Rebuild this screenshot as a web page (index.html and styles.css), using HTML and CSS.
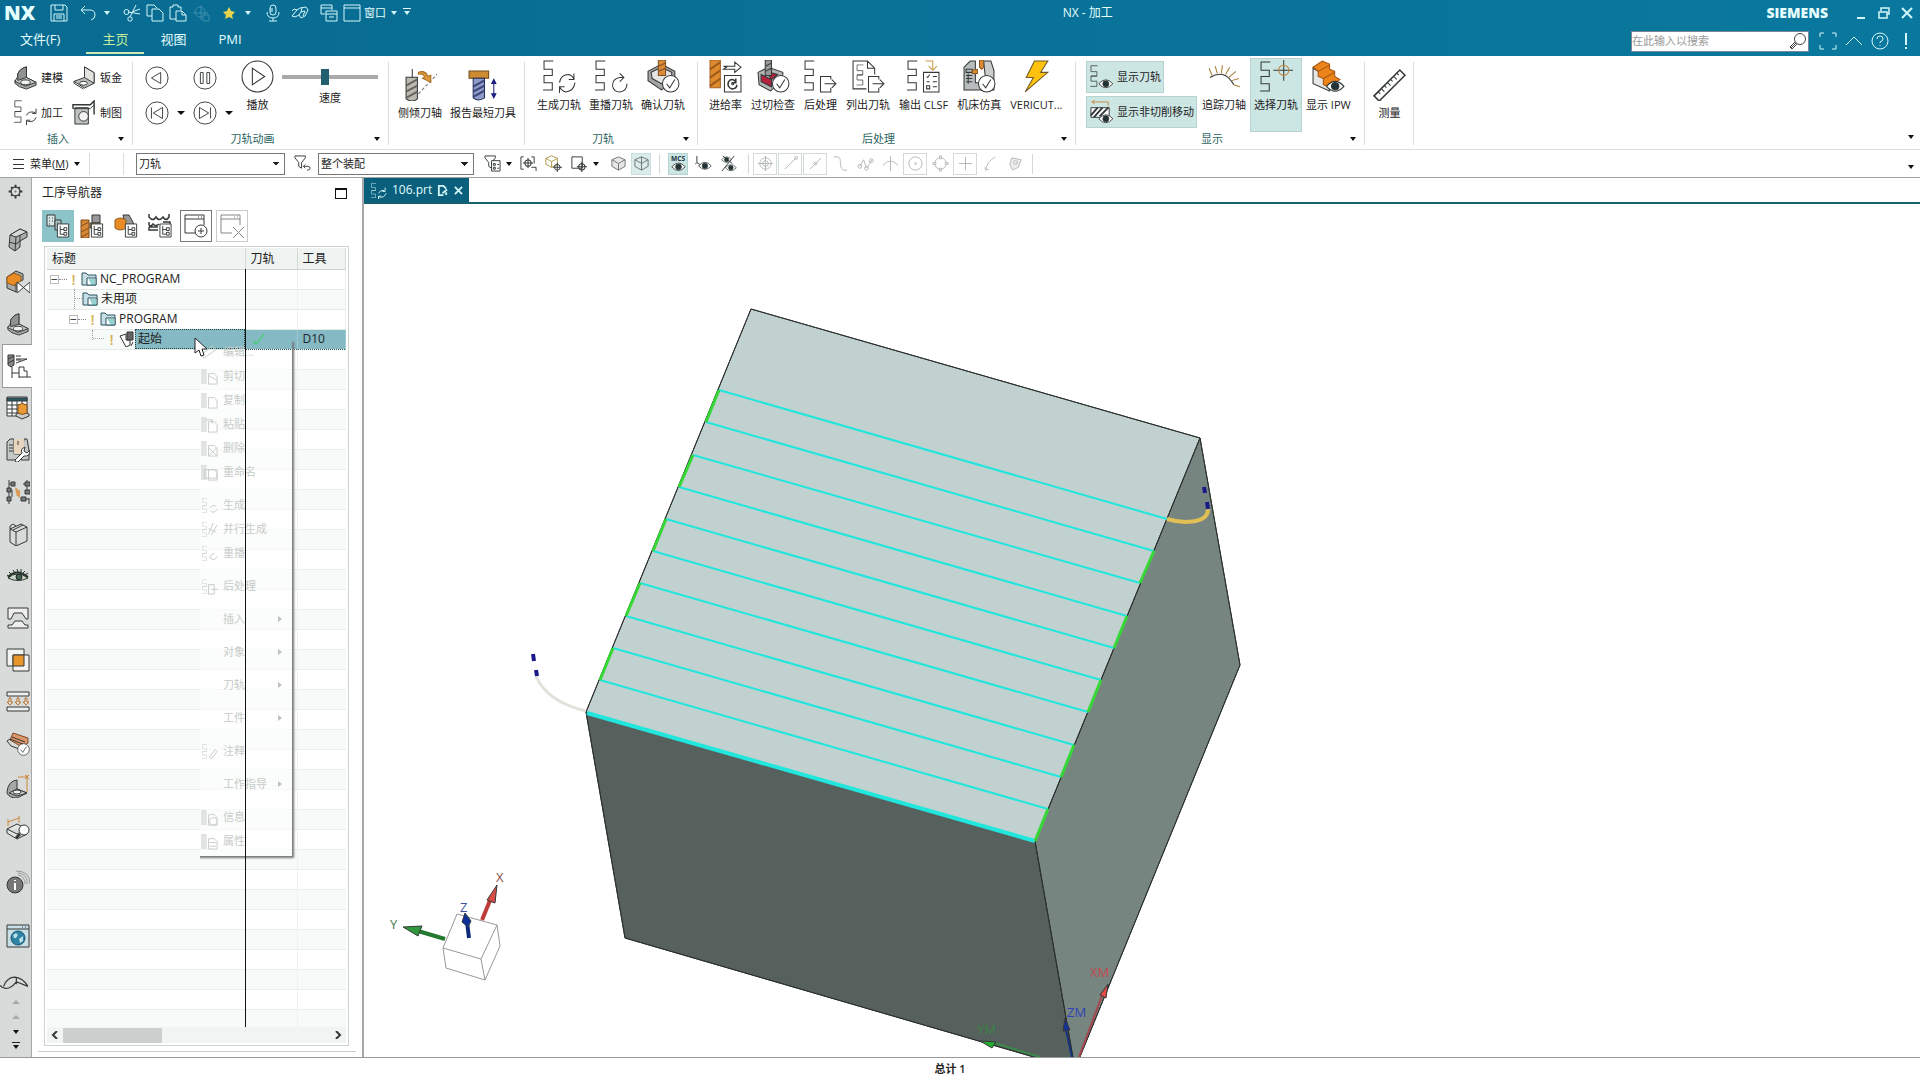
FILE: index.html
```html
<!DOCTYPE html>
<html lang="zh-CN">
<head>
    <meta charset="UTF-8">
    <meta name="viewport" content="width=device-width, initial-scale=1.0">
    <title>NX - 加工</title>
    <link rel="stylesheet" href="styles.css">
</head>
<body>
    <svg class="defs" width="0" height="0" aria-hidden="true">
        <symbol id="path" viewBox="0 0 11 30"><path d="M10 1H1V9H9V15H1M9 15H1V22H9V29H0"/></symbol>
        <symbol id="eye" viewBox="0 0 18 12"><path d="M1 6Q9-3 17 6Q9 15 1 6Z" fill="#fff"/><circle cx="9" cy="6" r="3.4" fill="#1f3336"/></symbol>
        <symbol id="check" viewBox="0 0 18 18"><circle cx="9" cy="9" r="8" fill="#fff"/><path d="M5 9l3 4 5-8"/></symbol>
        <symbol id="tree" viewBox="0 0 14 16"><path d="M1 1H13V15H1Z" fill="#fff"/><path d="M4 3V12H8M4 7H8M8 5h3v3H8zM8 10h3v3H8z"/></symbol>
        <symbol id="folder" viewBox="0 0 16 16"><path d="M1 14V2H5L7 4H15V14Z" fill="#c5dfe5" stroke="#2c5560"/><path d="M6 7H15V14H6Z" fill="#fff" stroke="#2c5560"/><path d="M8 9H14M9 11H14M10 13H14" stroke="#2aa7a0"/></symbol>
        <symbol id="model" viewBox="0 0 26 26"><path d="M5 16V9Q8 3 14 2V13L24 18V21L14 25Q5 23 2 19V16Z" fill="#a4a8a6"/><path d="M14 13L24 18L13 22L2 17L5 12Z" fill="#c9cccb"/><path d="M5 9Q8 3 14 2V13L5 16Z" fill="#8f9492"/><ellipse cx="13" cy="18" rx="5" ry="2.500" fill="#f2f2f2"/></symbol>
        <symbol id="cube" viewBox="0 0 16 16"><path d="M8 1L15 4V11L8 15L1 11V4ZM1 4L8 8L15 4M8 8V15"/></symbol>
        <symbol id="target" viewBox="0 0 10 10"><circle cx="5" cy="5" r="3"/><path d="M5 0V10M0 5H10"/></symbol>
        <symbol id="page" viewBox="0 0 18 18"><path d="M0 1H6V17H0Z" fill="#e0e3e1" stroke="none"/><path d="M8 6H14L17 9V17H8Z" fill="#fff"/></symbol>
    </svg>

    <header class="top">
        <div class="titlebar">
            <div class="quick">
                <strong class="logo">NX</strong>
                <button class="qb save" aria-label="保存"><svg viewBox="0 0 18 18"><path d="M1 1H15L17 3V17H1ZM5 1V6H13V1M4 17V10H14V17M6 12H12M6 14H12"/></svg></button>
                <button class="qb undo" aria-label="撤消"><svg viewBox="0 0 18 18"><path d="M6 2L2 6L6 10M2 6H11Q16 6 16 11Q16 15 12 16"/></svg></button>
                <i class="caret"></i>
                <button class="qb cut" aria-label="剪切"><svg viewBox="0 0 18 18"><path d="M5 8L17 10M7 13L13 1M9 8L17 5"/><circle cx="3.500" cy="8" r="2.500"/><circle cx="7" cy="15" r="2.200"/></svg></button>
                <button class="qb" aria-label="复制"><svg viewBox="0 0 18 18"><path d="M6 12H1V1H8L11 4M6 5H13L17 9V17H6Z"/></svg></button>
                <button class="qb" aria-label="粘贴"><svg viewBox="0 0 18 18"><path d="M7 15H1V3H4V1H9V3H12V6M7 7H13L17 11V17H7ZM13 7V11H17"/></svg></button>
                <button class="qb dim" aria-label="移动"><svg viewBox="0 0 18 18"><path d="M9 1V16M1 9H16"/><circle cx="8" cy="8" r="5"/><path d="M11 11H17V17H11Z"/></svg></button>
                <button class="qb star" aria-label="收藏"><svg viewBox="0 0 18 18"><path d="M9 3L11 7L15 8L12 11L13 15L9 13L5 15L6 11L3 8L7 7Z" fill="#e8d44c" stroke="none"/></svg></button>
                <i class="caret"></i>
                <button class="qb mic" aria-label="语音"><svg viewBox="0 0 18 18"><rect x="6" y="1" width="6" height="10" rx="3"/><path d="M3 8Q3 14 9 14Q15 14 15 8M9 14V17M5 17H13M6 5H9M6 7H9"/></svg></button>
                <button class="qb hand" aria-label="触控"><svg viewBox="0 0 18 18"><path d="M1 12L6 6L9 4L15 3L17 6L14 12L10 14L8 11L4 13ZM6 6L3 5L1 7M8 11L10 8L14 7L12 12M11 4L10 8"/></svg></button>
                <button class="qb" aria-label="切换窗口"><svg viewBox="0 0 18 18"><path d="M5 10H1V1H12V6M1 4H12M6 7H17V17H6ZM6 10H17M9 13H14"/></svg></button>
                <button class="qb win"><svg viewBox="0 0 18 18"><path d="M1 1H17V17H1ZM1 4H17"/></svg><span>窗口</span></button>
                <i class="caret"></i>
                <i class="caret over"></i>
            </div>
            <div class="title">NX - 加工</div>
            <div class="wincontrols">
                <strong class="siemens">SIEMENS</strong>
                <button aria-label="最小化"><svg viewBox="0 0 12 12"><path d="M2 11H10" stroke-width="2"/></svg></button>
                <button aria-label="还原"><svg viewBox="0 0 12 12"><path d="M3 4V1H11V7H9M1 5H9V11H1Z" stroke-width="1.500"/></svg></button>
                <button aria-label="关闭"><svg viewBox="0 0 12 12"><path d="M1 1L11 11M11 1L1 11" stroke-width="2"/></svg></button>
            </div>
        </div>
        <div class="menurow">
            <nav class="tabs">
                <button class="file">文件(F)</button>
                <button class="active">主页</button>
                <button>视图</button>
                <button>PMI</button>
            </nav>
            <div class="tools">
                <label class="search">
                    <input type="text" placeholder="在此输入以搜索" aria-label="搜索">
                    <svg viewBox="0 0 18 18"><circle cx="11" cy="7" r="5.500"/><path d="M7 11L2 16M6 10L1 15L3 17L8 12"/></svg>
                </label>
                <button aria-label="全屏"><svg viewBox="0 0 18 18"><path d="M1 5V1H5M13 1H17V5M17 13V17H13M5 17H1V13"/></svg></button>
                <button aria-label="最小化功能区"><svg viewBox="0 0 18 18"><path d="M1 13L9 5L17 13"/></svg></button>
                <button aria-label="帮助"><svg viewBox="0 0 18 18"><circle cx="9" cy="9" r="8"/><path d="M6 7Q6 4 9 4Q12 4 12 7Q12 9 9 10V11M9 13V14"/></svg></button>
                <button class="alert" aria-label="提示"><svg viewBox="0 0 18 18"><path d="M9 1V13M9 15V17" stroke-width="2"/></svg></button>
            </div>
        </div>
    </header>

    <section class="ribbon">
        <div class="group insert">
            <div class="pair">
                <button class="small"><svg viewBox="0 0 26 26"><use href="#model"/></svg>建模</button>
                <button class="small"><svg viewBox="0 0 26 26"><path d="M13 2L23 8V19L13 24L2 17L13 13Z" fill="#b9bcba"/><path d="M13 2L23 8V19L13 13Z" fill="#e2e2de"/><path d="M2 17V19L12 25"/><ellipse cx="12" cy="19" rx="4" ry="2" fill="#fff"/></svg>钣金</button>
                <button class="small"><svg viewBox="0 0 26 26"><use href="#path" x="1" y="0" width="9" height="24"/><path d="M14 16Q16 11 23 13M24 9V14H20M24 18Q22 24 15 22M14 26V21H18"/></svg>加工</button>
                <button class="small"><svg viewBox="0 0 26 26"><path d="M3 8H17V25H3Z" fill="#bfc3c1"/><path d="M1 9V5H19L23 1V15" stroke-width="1.500"/><path d="M1 9H19L23 5"/><circle cx="12" cy="17" r="5" fill="#f2f2f2"/></svg>制图</button>
            </div>
            <div class="caption">插入<i class="caret"></i></div>
        </div>
        <div class="group anim">
            <div class="content">
                <div class="player">
                    <button aria-label="反向播放"><svg viewBox="0 0 26 26"><circle cx="13" cy="13" r="12"/><path d="M17 7V19L7 13Z"/></svg></button><i></i>
                    <button aria-label="暂停"><svg viewBox="0 0 26 26"><circle cx="13" cy="13" r="12"/><path d="M8 7H11V19H8ZM15 7H18V19H15Z"/></svg></button><i></i>
                    <button aria-label="后退"><svg viewBox="0 0 26 26"><circle cx="13" cy="13" r="12"/><path d="M19 7V19L9 13ZM7 7V19"/></svg></button><i class="caret"></i>
                    <button aria-label="前进"><svg viewBox="0 0 26 26"><circle cx="13" cy="13" r="12"/><path d="M7 7V19L17 13ZM19 7V19"/></svg></button><i class="caret"></i>
                </div>
                <button class="big"><svg viewBox="0 0 32 32"><circle cx="16" cy="16" r="15"/><path d="M11 8V24L23 16Z"/></svg>播放</button>
                <label class="speed"><input type="range" min="0" max="100" value="44">速度</label>
            </div>
            <div class="caption">刀轨动画<i class="caret"></i></div>
        </div>
        <div class="group tilt">
            <div class="content low">
                <button class="big"><svg viewBox="0 0 32 32"><path d="M2 9H13V30Q8 34 2 30Z" fill="#bcb9b0"/><path d="M2 17L13 11M2 23L13 17M2 29L13 23" stroke="#66645e" stroke-width="2"/><path d="M8 1V9"/><path d="M14 25L32 6" stroke="#777" stroke-dasharray="3 2"/><path d="M14 4Q21 2 23 8L26 7V14L18 10L20 9Q19 5 14 6Z" fill="#dc9a3c" stroke="#a76f24"/></svg>侧倾刀轴</button>
                <button class="big"><svg viewBox="0 0 32 32"><path d="M2 3H21V10H2Z" fill="#cf8a34" stroke="#704818"/><path d="M6 10H17V29Q11 33 6 29Z" fill="#8f9cc8" stroke="#272f58"/><path d="M6 18L17 12M6 23L17 17M6 28L17 22" stroke="#3b4478" stroke-width="2"/><path d="M26 12V28M24 15L26 11L28 15ZM24 25L26 29L28 25Z" fill="#1c1e80" stroke="#1c1e80"/></svg>报告最短刀具</button>
            </div>
        </div>
        <div class="group gen">
            <div class="content">
                <button class="big"><svg viewBox="0 0 32 32"><use href="#path" x="0" y="0" width="11" height="30"/><path d="M16 22Q17 14 25 14Q29 15 30 19M30 13V19H25M31 22Q30 30 22 31Q18 30 16 26M16 32V26H21"/></svg>生成刀轨</button>
                <button class="big"><svg viewBox="0 0 32 32"><use href="#path" x="0" y="0" width="11" height="30"/><path d="M27 17H24Q17 18 17 25Q18 31 24 31Q31 30 31 23M24 13L28 17L24 21"/></svg>重播刀轨</button>
                <button class="big"><svg viewBox="0 0 32 32"><path d="M14 4L1 11V20L14 29L27 20V11Z" fill="#a4a6a4"/><path d="M14 7L4 12L5 18L14 23L24 16V12Z" fill="#e4e4e2"/><path d="M11 0H18V15H11Z" fill="#dc8a35" stroke="#7a5226"/><path d="M11 6L18 3M11 11L18 8" stroke="#7a5226"/><use href="#check" x="14" y="14" width="18" height="18"/></svg>确认刀轨</button>
            </div>
            <div class="caption">刀轨<i class="caret"></i></div>
        </div>
        <div class="group post">
            <div class="content">
                <button class="big"><svg viewBox="0 0 32 32"><path d="M1 0H11V27H1Z" fill="#e08a2e" stroke="#a46222"/><path d="M1 9L11 2M1 17L11 10M1 25L11 18" stroke="#9c5c1c" stroke-width="2"/><path d="M14 6H25V2L31 7L25 12V9H14L17 7Z" fill="#fff"/><path d="M15 15H31V31H15Z" fill="#fff"/><path d="M26 18L26 22H22M26 21Q22 17 19 21Q17 26 22 28Q27 28 27 24" stroke-width="1.500"/><circle cx="23" cy="23" r="1"/></svg>进给率</button>
                <button class="big"><svg viewBox="0 0 32 32"><path d="M1 12L11 7L25 12V20L13 30L2 24Z" fill="#b4b6b6"/><path d="M4 14L14 19V26L4 21ZM14 19L20 14L9 11Z" fill="#b5203c"/><path d="M8 0H14V15H8Z" fill="#999"/><path d="M8 6L14 3M8 11L14 8"/><use href="#check" x="14" y="14" width="18" height="18"/></svg>过切检查</button>
                <button class="big"><svg viewBox="0 0 32 32"><use href="#path" x="0" y="0" width="11" height="30"/><path d="M26 19V16H16V31H26V27M20 23H31M27 19L31 23L27 27"/></svg>后处理</button>
                <button class="big"><svg viewBox="0 0 32 32"><path d="M14 28H1V1H15L22 8V14M15 1V8H22M16 28V16H26V19M26 27V31H16V28M20 23H31M27 19L31 23L27 27"/><use href="#path" x="4" y="4" width="8" height="21"/></svg>列出刀轨</button>
                <button class="big"><svg viewBox="0 0 32 32"><use href="#path" x="0" y="0" width="11" height="30"/><path d="M16 12H31V31H16ZM19 16l1 1 2-3M19 21H22M19 25H22V28H19ZM25 16H29M25 21H29M25 26H29"/><path d="M18 1H25V9M21 6L25 10L29 6" stroke="#c79a45"/></svg>输出 CLSF</button>
                <button class="big"><svg viewBox="0 0 32 32"><path d="M1 29V7L7 1H12V22H18V29Z" fill="#b8bcbc"/><path d="M20 1H27L30 10V29H18V20H22Z" fill="#c8cccc"/><path d="M3 9H9V12H3ZM3 15H9M3 18H9M3 21H9M5 13V23"/><path d="M16 0H20V7L18 9L16 7ZM9 10L14 9V13L9 13Z" fill="#dc8a35" stroke="#8a5a20"/><use href="#check" x="14" y="14" width="18" height="18"/></svg>机床仿真</button>
                <button class="big"><svg viewBox="0 0 32 32"><path d="M14 1H27L20 12H27L5 31L13 17H6Z" fill="#ffc20e" stroke="#6e5a2a"/></svg>VERICUT...</button>
            </div>
            <div class="caption">后处理<i class="caret"></i></div>
        </div>
        <div class="group show">
            <div class="content">
                <div class="toggles">
                    <button class="small on"><svg viewBox="0 0 26 26"><use href="#path" x="1" y="0" width="9" height="23"/><use href="#eye" x="9" y="14" width="17" height="11"/></svg>显示刀轨</button>
                    <button class="small on"><svg viewBox="0 0 26 26"><path d="M2 8H21V18H2Z" fill="#fff"/><path d="M2 16L9 8M5 18L14 8M11 17L20 8" stroke-width="2"/><path d="M3 2H20M6 0L3 2L6 4M20 2V6" stroke="#c78a45"/><use href="#eye" x="9" y="14" width="17" height="11"/></svg>显示非切削移动</button>
                </div>
                <button class="big"><svg viewBox="0 0 32 32"><path d="M2 17Q16 8 25 24"/><path d="M4 15L1 8M9 13L7 6M13 13L14 5M17 14L21 7M20 17L27 11M23 20L30 18M25 24L31 26" stroke="#a67c30"/></svg>追踪刀轴</button>
                <button class="big on"><svg viewBox="0 0 32 32"><use href="#path" x="0" y="1" width="11" height="30"/><path d="M23 0V20M13 10H32"/><circle cx="23" cy="10" r="5" stroke="#c08440"/></svg>选择刀轨</button>
                <button class="big"><svg viewBox="0 0 32 32"><path d="M1 8L17 17V30L1 23Z" fill="#e6e6e6"/><path d="M1 7L10 1L17 4V9L22 11V16L27 19L16 26L11 24V18L6 16V11Z" fill="#ec8419" stroke="#a35410"/><path d="M6 11L17 5M11 18L22 12" stroke="#a35410"/><use href="#eye" x="13" y="19" width="19" height="13"/></svg>显示 IPW</button>
            </div>
            <div class="caption">显示<i class="caret"></i></div>
        </div>
        <div class="group measure">
            <div class="content low">
                <button class="big"><svg viewBox="0 0 32 32"><path d="M1 27L26 2L31 7L6 32Z" stroke-width="1.500"/><path d="M5 23L7 25M8 20L11 23M11 17L13 19M14 14L17 17M17 11L19 13M20 8L23 11M23 5L25 7"/></svg>测量</button>
            </div>
        </div>
        <i class="caret end"></i>
    </section>

    <section class="selbar">
        <button class="menu"><svg viewBox="0 0 12 12"><path d="M1 1.500H12M1 6.500H12M1 10.500H12"/></svg>菜单(<u>M</u>)<i class="caret"></i></button>
        <span class="gap"></span>
        <select class="type" aria-label="类型过滤器"><option>刀轨</option></select>
        <button class="ib f1" aria-label="重置过滤器"><svg viewBox="0 0 18 18"><path d="M1 1H12V3L8 8V14L5 12V8L1 3ZM10 12H15Q17 12 17 14Q17 16 14 16M12 10L10 12L12 14"/></svg></button>
        <select class="scope" aria-label="选择范围"><option>整个装配</option></select>
        <button class="ib f2" aria-label="过滤器"><svg viewBox="0 0 18 18"><path d="M1 1H12V3L8 8V14L5 12V8L1 3Z"/><path d="M8 6H17V17H8ZM10 9h2v2h-2zM10 13h2v2h-2zM14 10h2M14 14h2" fill="#fff"/></svg></button>
        <i class="caret"></i>
        <button class="ib" aria-label="选择全部"><svg viewBox="0 0 18 18"><path d="M4 2H1V15H4M12 2H15V9"/><use href="#target" x="3" y="3" width="11" height="11"/><path d="M12 13H17V17"/></svg></button>
        <button class="ib" aria-label="选择体"><svg viewBox="0 0 18 18"><g stroke="#a58b2c"><use href="#cube" width="14" height="14"/></g><use href="#target" x="8" y="8" width="10" height="10"/></svg></button>
        <button class="ib" aria-label="矩形选择"><svg viewBox="0 0 18 18"><path d="M2 2H13V14H2Z"/><use href="#target" x="7" y="7" width="11" height="11"/></svg></button>
        <i class="caret pick"></i>
        <button class="ib gray" aria-label="着色"><svg viewBox="0 0 18 18"><path d="M9 2L16 5V12L9 16L2 12V5Z" fill="#ddd"/><path d="M2 5L9 9L16 5M9 9V16"/></svg></button>
        <button class="ib on gray" aria-label="线框"><svg viewBox="0 0 18 18"><use href="#cube" x="1" y="1" width="16" height="16"/><path d="M9 2V9"/></svg></button>
        <span class="div"></span>
        <button class="ib on" aria-label="显示 MCS"><svg viewBox="0 0 18 18"><text x="1" y="6">MCS</text><use href="#eye" x="1" y="7" width="16" height="11"/></svg></button>
        <button class="ib" aria-label="显示坐标系"><svg viewBox="0 0 18 18"><path d="M2 1V8L8 12M2 8L0 10"/><use href="#eye" x="3" y="6" width="15" height="11"/></svg></button>
        <button class="ib" aria-label="隐藏"><svg viewBox="0 0 18 18"><use href="#eye" x="1" y="1" width="12" height="8"/><use href="#eye" x="5" y="9" width="13" height="9"/><path d="M15 1L2 17M3 1L13 9"/></svg></button>
        <span class="div"></span>
        <div class="snaps">
            <button class="box" aria-label="捕捉点"><svg viewBox="0 0 18 18"><circle cx="9" cy="9" r="6"/><circle cx="9" cy="9" r="3"/><path d="M9 1V17M1 9H17"/></svg></button>
            <button class="box" aria-label="端点"><svg viewBox="0 0 18 18"><path d="M3 15L15 3"/><circle cx="15" cy="3" r="1.500"/></svg></button>
            <button class="box" aria-label="中点"><svg viewBox="0 0 18 18"><path d="M3 15L15 3"/><circle cx="9" cy="9" r="1.500"/></svg></button>
            <button aria-label="控制点"><svg viewBox="0 0 18 18"><path d="M2 2H6Q9 2 9 9Q9 16 13 16H16"/></svg></button>
            <button aria-label="极点"><svg viewBox="0 0 18 18"><path d="M3 12L7 5L10 14L16 5"/><circle cx="3" cy="12" r="2"/><circle cx="10" cy="14" r="2"/><circle cx="15" cy="6" r="2"/></svg></button>
            <button aria-label="交点"><svg viewBox="0 0 18 18"><path d="M9 1V17M1 11Q9 2 17 11"/></svg></button>
            <button class="box" aria-label="圆心"><svg viewBox="0 0 18 18"><circle cx="9" cy="9" r="7"/><circle cx="9" cy="9" r="1"/></svg></button>
            <button aria-label="象限点"><svg viewBox="0 0 18 18"><circle cx="9" cy="9" r="6"/><path d="M8 1H10V4H8ZM8 14H10V17H8ZM1 8H4V10H1ZM14 8H17V10H14Z" fill="#fff"/></svg></button>
            <button class="box" aria-label="现有点"><svg viewBox="0 0 18 18"><path d="M9 2V16M2 9H16"/></svg></button>
            <button aria-label="曲线上的点"><svg viewBox="0 0 18 18"><path d="M4 16Q5 7 14 2M3 13L4 16L7 15"/></svg></button>
            <button aria-label="面上的点"><svg viewBox="0 0 18 18"><path d="M5 3L15 5L12 13L6 16L3 10Z" fill="#eee"/><circle cx="9" cy="8" r="2"/></svg></button>
        </div>
        <span class="div"></span>
        <i class="caret end"></i>
    </section>

    <main class="work">
        <nav class="rail">
            <button class="gear" aria-label="设置"><svg viewBox="0 0 24 24"><circle cx="12" cy="12" r="7" stroke-width="2"/><circle cx="12" cy="12" r="1"/><path d="M12 1V5M12 19V23M1 12H5M19 12H23M5 5L7 7M17 17L19 19M19 5L17 7M5 19L7 17" stroke-width="3"/></svg></button>
            <button aria-label="装配导航器"><svg viewBox="0 0 24 24"><path d="M4 7L14 1L21 4V9L14 13V19L9 23L3 19Z" fill="#a9adab"/><path d="M4 7L14 1L21 4L10 9Z" fill="#d5d8d6"/><path d="M10 9L9 23M3 14L10 16L14 13M14 13V7"/></svg></button>
            <button aria-label="约束导航器"><svg viewBox="0 0 24 24"><path d="M1 7L10 1L17 4V10L10 13V22L1 18Z" fill="#a9adab"/><path d="M1 7L8 3L15 6V11L9 14V16L1 13Z" fill="#ea8c25" stroke="#8a5a20"/><path d="M11 12L24 23V12L11 23Z" fill="#fff"/></svg></button>
            <button aria-label="部件导航器"><svg viewBox="0 0 26 26"><use href="#model"/></svg></button>
            <button class="active" aria-label="工序导航器"><svg viewBox="0 0 24 24"><path d="M1 1H7V11L4 13L1 11Z" fill="#888"/><path d="M1 5L7 2M1 9L7 6M9 2H14M9 5H20L9 9M9 6H14M5 13V24M5 19H12M12 13V24M12 13H17V17H20V23H24M12 23H20"/></svg></button>
            <button aria-label="机床导航器"><svg viewBox="0 0 24 24"><path d="M1 1H21V20H1Z" fill="#fff"/><path d="M1 2H21V5H1Z" fill="#255a67"/><path d="M1 9H21M1 13H21M1 17H21M6 5V20M11 5V20M16 5V20"/><path d="M10 18L16 15L23 18V20L16 23L10 20Z" fill="#ccc"/><path d="M12 9Q16 6 21 9V17Q16 20 12 17Z" fill="#ea9a35" stroke="#80501c"/></svg></button>
            <button aria-label="机床"><svg viewBox="0 0 24 24"><path d="M1 22V4L4 1H8V16H14V22ZM18 1H21L23 12V22H15Z" fill="#c5c9c6"/><path d="M8 1H18V16H8Z" fill="#e8d5bd" stroke="none"/><path d="M3 7H7M3 10H7M3 13H7M12 3V7"/><path d="M9 22L16 15Q14 11 19 9L18 13L21 15L24 12Q24 19 18 18L12 24Q9 25 9 22Z" fill="#fff"/></svg></button>
            <button aria-label="特征"><svg viewBox="0 0 24 24"><path d="M3 0V24M3 4H5M3 10H6V17M21 0V12M21 4H17M23 18V24M18 19H23"/><path d="M5 2H9V6H5ZM1 8H5V12H1ZM1 17H5V21H1ZM19 2H24V6H19ZM19 10H24V14H19ZM15 17H20V21H15Z" fill="#777"/><path d="M9 7L14 11L10 14ZM14 10V18L10 15Z" fill="#d99a54" stroke="none"/></svg></button>
            <button aria-label="重用库"><svg viewBox="0 0 24 24"><path d="M4 7L15 2L21 5V19L10 24L4 20ZM4 7L10 10L21 5M10 10V24M7 8L17 3M10 4L7 2L4 4V7"/></svg></button>
            <button aria-label="视图"><svg viewBox="0 0 24 24"><path d="M2 14Q11 6 22 14Q12 19 2 14Z" fill="#cfd8cb" stroke="#2b3d2e"/><circle cx="13" cy="13" r="3" fill="#456349" stroke="#223"/><path d="M2 13Q11 4 22 13" stroke="#263326" stroke-width="2"/><path d="M1 11L4 13M3 8L6 11M7 6L9 9M11 5L12 8M15 5V8M19 7L17 9M22 9L19 11" stroke="#263326"/></svg></button>
            <button aria-label="冲压"><svg viewBox="0 0 24 24"><path d="M2 2H22V13H20L16 7H8L5 13H2ZM2 22V19H6L9 15H16L19 19H22V22Z" fill="#eee"/></svg></button>
            <button aria-label="图层"><svg viewBox="0 0 24 24"><path d="M1 1H18V18H1Z" fill="#f2f2f0"/><path d="M7 7H23V23H7Z" fill="#f2f2f0"/><path d="M7 7H18V18H7Z" fill="#e8952c"/></svg></button>
            <button aria-label="压力"><svg viewBox="0 0 24 24"><path d="M1 2H23V6H1ZM1 17H23V21H1Z" fill="#eee"/><path d="M3 8H5V12H7L4 15L1 12H3ZM11 8H13V12H15L12 15L9 12H11ZM19 8H21V12H23L20 15L17 12H19Z" stroke="#ba762c"/></svg></button>
            <button aria-label="检查"><svg viewBox="0 0 24 24"><path d="M7 1L22 6V11L16 15L4 8Z" fill="#dc9668" stroke="#7b4a2b"/><path d="M1 9L4 7L19 13M1 9L5 14L16 18M6 5L19 10"/><use href="#check" x="11" y="11" width="13" height="13"/></svg></button>
            <button aria-label="测量部件"><svg viewBox="0 0 24 24"><path d="M1 18Q2 7 11 6V15L21 19L11 24Q3 24 1 19Z" fill="#a4a8a6"/><path d="M11 15L21 19L11 22L3 19Z" fill="#cccfcd"/><ellipse cx="11" cy="18" rx="4" ry="2" fill="#eee"/><path d="M12 3H21M21 1V18M19 1L23 5M23 1L19 5" stroke="#cc8a3c"/></svg></button>
            <button aria-label="查找"><svg viewBox="0 0 24 24"><path d="M1 13L11 8L21 13V18L11 23L1 17ZM1 13L11 18L21 13" fill="#e5e7e4"/><path d="M2 3V10M2 6L13 2M13 0V7" stroke="#cc8a3c"/><circle cx="18" cy="14" r="5" fill="#fff"/><path d="M14 18L10 22" stroke-width="3"/></svg></button>
            <button class="info" aria-label="信息"><svg viewBox="0 0 24 24"><circle cx="9" cy="15" r="8" fill="#777"/><path d="M9 13V20M9 10V11" stroke="#fff" stroke-width="2"/><path d="M12 5Q19 6 19 14M12 3Q22 4 21 14M10 1Q24 1 24 14" stroke="#999"/></svg></button>
            <button class="web" aria-label="浏览器"><svg viewBox="0 0 24 24"><path d="M1 1H23V23H1Z" fill="#c9dfe6"/><path d="M1 5H23M16 3H17M19 3H20"/><circle cx="12" cy="14" r="7" fill="#2f83a4" stroke="#17566f"/><path d="M7 11L10 9L12 11L10 14L8 14ZM13 15L17 12L17 17L14 19Z" fill="#b9e0e8" stroke="none"/></svg></button>
            <button class="curve" aria-label="曲面"><svg viewBox="0 0 24 24"><path d="M0 14Q3 18 8 16Q12 14 14 11L24 15M3 15Q6 7 13 7Q20 8 24 15M14 7V13"/></svg></button>
            <span class="more"><i class="up"></i><i class="up"></i><i class="caret"></i><i class="caret over"></i></span>
        </nav>

        <aside class="navigator">
            <div class="panel-title"><h2>工序导航器</h2><button aria-label="最大化"></button></div>
            <div class="views">
                <button class="on" aria-label="程序顺序视图"><svg viewBox="0 0 24 24"><path d="M1 1H9V12H1Z" fill="#d9e4e4"/><path d="M9 6H15V16H9Z" fill="#a9c3c3"/><path d="M3 4H4M6 4H7M3 7H4M6 7H7M3 10H4M11 9H12"/><use href="#tree" x="10" y="9" width="14" height="15"/></svg></button>
                <button aria-label="机床视图"><svg viewBox="0 0 24 24"><path d="M1 6H9V24H1Z" fill="#d88834" stroke="#7c4c1c"/><path d="M1 12L9 8M1 18L9 14M1 23L9 19" stroke="#7c4c1c"/><path d="M12 1H20V9H12Z" fill="#999"/><path d="M10 9H20V14H10Z" fill="#d88834"/><use href="#tree" x="10" y="9" width="14" height="15"/></svg></button>
                <button aria-label="几何视图"><svg viewBox="0 0 24 24"><path d="M9 1H15L21 12V16H12Z" fill="#999"/><path d="M1 6Q6 2 12 6V14Q6 18 1 14Z" fill="#ea8c25" stroke="#8a5a20"/><use href="#tree" x="10" y="9" width="14" height="15"/></svg></button>
                <button aria-label="加工方法视图"><svg viewBox="0 0 24 24"><path d="M1 0V3Q5 8 8 3Q11 8 15 3Q18 8 21 3V0M1 8V11Q3 13 5 10Q8 13 11 10M1 13V16H10M15 8H22V12M1 13H10" stroke-width="1.500"/><use href="#tree" x="11" y="9" width="13" height="15"/></svg></button>
                <button class="framed" aria-label="创建"><svg viewBox="0 0 24 24"><path d="M12 19H1V1H20V11M1 5H20M14 3H15M17 3H18"/><circle cx="17" cy="17" r="6" fill="#fff"/><path d="M17 14V20M14 17H20"/></svg></button>
                <button class="framed off" aria-label="删除"><svg viewBox="0 0 24 24"><path d="M12 19H1V1H20V11M1 5H20M14 3H15M17 3H18M13 13L24 24M24 13L13 24"/></svg></button>
            </div>
            <div class="grid">
                <table>
                    <thead>
                        <tr><th class="name">标题</th><th class="toolpath">刀轨</th><th>工具</th></tr>
                    </thead>
                    <tbody>
                        <tr><td><div class="node n1"><button class="fold" aria-label="折叠">−</button><i class="dots"></i><b>!</b><svg viewBox="0 0 16 16"><use href="#folder"/></svg>NC_PROGRAM</div></td><td></td><td></td></tr>
                        <tr><td><div class="node n2"><i class="dots"></i><svg viewBox="0 0 16 16"><use href="#folder"/></svg>未用项</div></td><td></td><td></td></tr>
                        <tr><td><div class="node n3"><button class="fold" aria-label="折叠">−</button><i class="dots"></i><b>!</b><svg viewBox="0 0 16 16"><use href="#folder"/></svg>PROGRAM</div></td><td></td><td></td></tr>
                        <tr class="selected"><td><div class="node n4"><i class="dots"></i><b>!</b><svg viewBox="0 0 16 16"><path d="M1 5L7 3V9H11V14L7 16Z" fill="#fff" stroke="#333"/><path d="M8 1H14V9H8Z" fill="#666" stroke="#333"/><path d="M14 11L12 15" stroke="#333"/></svg><span>起始</span></div></td><td class="ok"><svg viewBox="0 0 14 14"><path d="M1 9L4 12L12 2"/></svg></td><td class="tool">D10</td></tr>
                    </tbody>
                </table>
                <div class="rows"></div>
                <div class="scroll"><button aria-label="向左"><svg viewBox="0 0 8 8"><path d="M6 0L2 4L6 8"/></svg></button><span><i></i></span><button aria-label="向右"><svg viewBox="0 0 8 8"><path d="M2 0L6 4L2 8"/></svg></button></div>

                <ul class="context">
                    <li><svg viewBox="0 0 18 18"><path d="M3 15L1 11L12 2L16 6Z"/></svg>编辑...</li>
                    <li><svg viewBox="0 0 18 18"><use href="#page"/><path d="M8 8L17 13"/></svg>剪切</li>
                    <li><svg viewBox="0 0 18 18"><use href="#page"/></svg>复制</li>
                    <li><svg viewBox="0 0 18 18"><use href="#page"/><path d="M5 4H12V8"/></svg>粘贴</li>
                    <li><svg viewBox="0 0 18 18"><use href="#page"/><path d="M8 8L17 17M17 8L8 17"/></svg>删除</li>
                    <li><svg viewBox="0 0 18 18"><use href="#page"/><path d="M4 6H17V15H4Z"/></svg>重命名</li>
                    <li class="sep"><svg viewBox="0 0 18 18"><use href="#path" x="1" y="1" width="6" height="16"/><path d="M10 12Q12 7 16 10M17 13Q14 18 10 15"/></svg>生成</li>
                    <li><svg viewBox="0 0 18 18"><use href="#path" x="1" y="1" width="6" height="16"/><path d="M8 14L13 2M11 15L17 4M8 8L16 12"/></svg>并行生成</li>
                    <li><svg viewBox="0 0 18 18"><use href="#path" x="1" y="1" width="6" height="16"/><path d="M14 9Q9 10 10 14Q14 18 17 12"/></svg>重播</li>
                    <li class="sep"><svg viewBox="0 0 18 18"><use href="#path" x="1" y="1" width="6" height="16"/><path d="M8 7H14V17H8ZM11 12H18"/></svg>后处理</li>
                    <li class="sep sub">插入</li>
                    <li class="sep sub">对象</li>
                    <li class="sep sub">刀轨</li>
                    <li class="sep sub">工件</li>
                    <li class="sep"><svg viewBox="0 0 18 18"><use href="#path" x="1" y="1" width="6" height="16"/><path d="M9 15L15 7L17 9L11 17Z"/></svg>注释</li>
                    <li class="sep sub">工作指导</li>
                    <li class="sep"><svg viewBox="0 0 18 18"><use href="#page"/><circle cx="13" cy="13" r="4" fill="#fff"/></svg>信息</li>
                    <li><svg viewBox="0 0 18 18"><use href="#page"/><path d="M9 10H16M9 14H16"/></svg>属性</li>
                </ul>
                <i class="splitter"></i>
                <svg class="cursor" viewBox="0 0 14 20"><path d="M1 1V16L5 13L7 19L10 18L8 12H13Z"/></svg>
            </div>
            <hr>
        </aside>

        <section class="view">
            <div class="doctabs">
                <button class="doc"><svg viewBox="0 0 18 18"><use href="#path" x="1" y="1" width="6" height="16"/><path d="M9 12Q11 8 15 9M16 6V10H13M17 12Q15 17 10 16M9 18V15H12"/></svg>106.prt<svg class="mod" viewBox="0 0 12 12"><path d="M7 11H2V1H7L10 4M10 8V11M6 9L11 5" stroke-width="2"/></svg><svg class="close" viewBox="0 0 10 10"><path d="M1 1L9 9M9 1L1 9" stroke-width="2"/></svg></button>
            </div>
            <svg class="scene" viewBox="364 204 1556 853" preserveAspectRatio="xMinYMin slice">
                <!-- workpiece -->
                <path d="M586 712L1035 841L1075 1069L625 938Z" fill="#56605c"/>
                <path d="M1200 438L1240 665L1075 1069L1035 841Z" fill="#778580"/>
                <path d="M751 309L1200 438L1035 841L586 712Z" fill="#c1d1cf"/>
                <path class="edge" d="M751 309L1200 438L1035 841L586 712ZM586 712L625 938L1075 1069L1240 665L1200 438M1035 841L1075 1069"/>
                <!-- cuts -->
                <g class="cut">
                    <path d="M719 390L1167 519M706 422L1154 551M693 455L1140 583M679 487L1127 616M666 519L1114 648M653 551L1101 680M640 583L1088 712M626 616L1074 745M613 648L1061 777M600 680L1048 809"/>
                    <path d="M587 713L1035 841" stroke-width="4"/>
                </g>
                <path class="step" d="M719 390L706 422M693 455L679 487M666 519L653 551M640 583L626 616M613 648L600 680M1154 551L1140 583M1127 616L1114 648M1101 680L1088 712M1074 745L1061 777M1048 809L1035 841"/>
                <path d="M1167 519C1180 523 1208 525 1208 509" fill="none" stroke="#e0bf55" stroke-width="4"/>
                <path d="M536 676C543 693 561 705 586 711" fill="none" stroke="#e2e2da" stroke-width="3"/>
                <path d="M1204 487L1205 493M1207 502L1208 509M533 654L534 661M536 670L537 676" fill="none" stroke="#1a1a88" stroke-width="4"/>
                <!-- machine axes -->
                <path d="M1079 1057L1103 993" fill="none" stroke="#a54850" stroke-width="2"/>
                <path d="M1108 984L1106 998L1100 995Z" fill="#e04b45"/>
                <path d="M1072 1057L1066 1030" fill="none" stroke="#15307c" stroke-width="2"/>
                <path d="M1065 1018L1070 1030L1063 1031Z" fill="#173195"/>
                <path d="M1040 1057L994 1043" fill="none" stroke="#3a8a48" stroke-width="2"/>
                <path d="M980 1041L996 1042L992 1048Z" fill="#22ad33"/>
                <text x="1090" y="977" fill="#c24a52">XM</text>
                <text x="1067" y="1017" fill="#3044b8">ZM</text>
                <text x="977" y="1034" fill="#3b8348">YM</text>
                <!-- view triad -->
                <path d="M457 914L497 925L481 959L443 948ZM443 948L446 968L485 980L481 959M485 980L500 946L497 925" fill="none" stroke="#999"/>
                <path d="M482 920L491 898" fill="none" stroke="#bd3b38" stroke-width="4"/>
                <path d="M497 885L495 903L487 900Z" fill="#d84c46"/>
                <path d="M445 939L418 931" fill="none" stroke="#247a31" stroke-width="4"/>
                <path d="M403 927L422 926L418 936Z" fill="#2f983d"/>
                <path d="M469 938L467 922" fill="none" stroke="#0c2b7d" stroke-width="4"/>
                <path d="M465 913L471 921L468 927L462 922Z" fill="#0b2f9b"/>
                <text x="496" y="882" fill="#8b4d4a">X</text>
                <text x="460" y="912" fill="#3c4f9c">Z</text>
                <text x="390" y="929" fill="#497a4f">Y</text>
            </svg>
        </section>
    </main>
    <footer class="status">总计 1</footer>
</body>
</html>
```
FILE: styles.css
```css
*{
    box-sizing: border-box;
}
html, body{
    height: 100%;
}
body{
    margin: 0;
    display: flex;
    flex-direction: column;
    overflow: hidden;
    background: #fff;
    color: #222;
    font-family: "Open Sans", "Noto Sans CJK SC", sans-serif;
    font-size: 11px;
    line-height: 16px;
}
button, input, select{
    font: inherit;
    color: inherit;
    background: none;
    border: 0;
    padding: 0;
    margin: 0;
    white-space: nowrap;
}
svg{
    display: block;
    flex: none;
    fill: none;
    stroke: #343838;
    stroke-width: 1;
}
.defs{
    position: absolute;
}
svg text{
    stroke: none;
}
.caret{
    width: 0;
    height: 0;
    flex: none;
    border: 3px solid transparent;
    border-top: 4px solid #111;
    border-bottom: 0;
}

/* title bar and tabs */
.top{
    background: linear-gradient(90deg, #096b91, #0a789e);
    color: #e4fdfd;
}
.top svg{
    stroke: #d2f6f8;
    width: 18px;
    height: 18px;
}
.top .caret{
    border-top-color: #d2f6f8;
}
.titlebar{
    height: 26px;
    display: flex;
    align-items: center;
}
.quick{
    display: flex;
    align-items: center;
    padding-left: 4px;
}
.logo{
    font-size: 20px;
    line-height: 24px;
    width: 46px;
    font-weight: 800;
}
.qb{
    display: flex;
    align-items: center;
    margin-right: 5px;
}
.undo, .star{
    margin-right: 7px;
}
.save{
    margin-right: 11px;
}
.quick .caret{
    margin-right: 13px;
}
.dim{
    opacity: .25;
    margin-right: 10px;
}
.mic{
    margin-right: 9px;
}
.hand{
    margin-right: 11px;
}
.win{
    gap: 3px;
}
.quick .win + .caret{
    margin-right: 7px;
}
.over::before{
    content: "";
    display: block;
    width: 8px;
    height: 1px;
    margin: -7px 0 0 -4px;
    background: currentColor;
}
.title{
    flex: 1;
    text-align: center;
    font-size: 12px;
    padding-right: 14px;
}
.wincontrols{
    display: flex;
    align-items: center;
    padding-right: 7px;
    gap: 11px;
}
.wincontrols svg{
    width: 12px;
    height: 12px;
}
.siemens{
    font-size: 14px;
    font-weight: 800;
    margin-right: 16px;
}
.menurow{
    height: 30px;
    display: flex;
    justify-content: space-between;
    align-items: center;
}
.tabs{
    display: flex;
    align-self: stretch;
    padding-left: 4px;
    font-size: 13px;
}
.tabs button{
    height: 28px;
    padding: 0 16px;
    border-bottom: 2px solid transparent;
}
.tabs .file{
    margin-right: 10px;
}
.tabs .active{
    color: #c5ec9c;
    border-color: #cde8b4;
}
.tools{
    display: flex;
    align-items: center;
    gap: 8px;
    padding-right: 5px;
}
.search{
    display: flex;
    align-items: center;
    width: 178px;
    height: 21px;
    background: #fff;
    border: 1px solid #789;
    margin-right: 2px;
    padding-right: 1px;
}
.search input{
    flex: 1;
    min-width: 0;
    color: #444;
}
.search input::placeholder{
    color: #9a9a9a;
}
.top .search svg{
    stroke: #444;
}

/* ribbon */
.ribbon{
    height: 94px;
    display: flex;
    padding: 2px 0 4px;
    border-bottom: 1px solid #dcdcdc;
}
.group{
    display: flex;
    flex-direction: column;
    position: relative;
    margin-top: 4px;
    border-right: 1px solid #dcdcdc;
}
.content{
    flex: 1;
    display: flex;
    align-items: flex-start;
    gap: 8px;
    margin-top: -2px;
    padding-left: 12px;
}
.content.low{
    margin-top: 6px;
}
.caption{
    display: flex;
    justify-content: center;
    align-items: center;
    height: 12px;
    padding-right: 16px;
    color: #2c6462;
}
.caption .caret{
    position: absolute;
    right: 8px;
}
.insert{
    width: 133px;
}
.pair{
    flex: 1;
    display: grid;
    grid-template-columns: auto auto;
    grid-auto-rows: 35px;
    margin-top: -2px;
    padding-left: 13px;
    justify-content: start;
    column-gap: 9px;
}
.small{
    display: flex;
    align-items: center;
    gap: 3px;
}
.small svg{
    width: 25px;
    height: 25px;
}
.anim{
    width: 256px;
}
.player{
    display: grid;
    grid-template-columns: 24px 8px 24px 8px;
    grid-auto-rows: 35px;
    column-gap: 8px;
    align-items: center;
}
.player svg{
    width: 24px;
    height: 24px;
}
.player .caret{
    border-width: 4px 4px 0;
}
.big{
    display: flex;
    flex-direction: column;
    align-items: center;
    gap: 4px;
}
.big svg{
    width: 33px;
    height: 33px;
}
.speed{
    display: flex;
    flex-direction: column;
    align-items: center;
    gap: 5px;
    margin-top: 9px;
}
.speed input{
    appearance: none;
    width: 96px;
    height: 16px;
    background: linear-gradient(#aaa, #aaa) center / 100% 4px no-repeat;
}
.speed input::-webkit-slider-thumb{
    appearance: none;
    width: 8px;
    height: 16px;
    background: #1f5f70;
}
.tilt{
    width: 136px;
}
.tilt .content{
    padding-left: 9px;
}
.gen{
    width: 173px;
}
.post{
    width: 378px;
}
.post .content{
    gap: 9px;
    padding-left: 11px;
}
.show{
    width: 289px;
}
.show .content{
    padding-left: 10px;
}
.toggles{
    display: flex;
    flex-direction: column;
    align-items: flex-start;
    gap: 3px;
    margin-top: 1px;
    margin-right: -3px;
}
.toggles .small{
    height: 32px;
    padding: 0 3px;
    gap: 3px;
}
.on{
    background: #cce6e3;
    box-shadow: inset 0 0 0 1px #b6d3d1;
}
.show .big.on{
    height: 74px;
    padding: 2px 4px 0;
    margin: -2px -4px 0;
}
.measure{
    width: 49px;
}
.measure .content{
    padding-left: 8px;
}
.end{
    margin: auto 6px 6px auto;
}

/* selection bar */
.selbar{
    height: 28px;
    display: flex;
    align-items: center;
    border-bottom: 1px solid #a0a0a0;
}
.menu{
    display: flex;
    align-items: center;
    width: 90px;
    height: 22px;
    padding-left: 12px;
    border-right: 1px solid #dcdcdc;
}
.menu svg{
    width: 12px;
    height: 12px;
    margin-right: 6px;
}
.menu .caret{
    margin-left: 6px;
}
.gap{
    width: 34px;
    height: 22px;
    margin-right: 12px;
    border-right: 1px solid #dcdcdc;
}
.selbar select{
    appearance: none;
    height: 22px;
    border: 1px solid #777;
    padding: 0 2px;
    background: linear-gradient(225deg, #222 50%, transparent 50%) right 8px center / 4px 4px no-repeat, linear-gradient(135deg, #222 50%, transparent 50%) right 4px center / 4px 4px no-repeat;
}
.type{
    width: 149px;
}
.scope{
    width: 156px;
}
.ib{
    width: 20px;
    height: 22px;
    display: flex;
    align-items: center;
    justify-content: center;
    margin-right: 5px;
}
.ib svg, .snaps svg{
    width: 17px;
    height: 17px;
}
.ib text{
    font-size: 7px;
    font-weight: bold;
    fill: #234;
}
.f1{
    margin: 0 6px 0 7px;
}
.f2{
    margin: 0 4px 0 8px;
}
.f2 + .caret{
    margin-right: 6px;
}
.pick{
    margin-right: 9px;
}
.gray{
    opacity: .7;
    margin-right: 3px;
}
.div{
    width: 1px;
    height: 20px;
    background: #d6d6d6;
    margin: 0 8px 0 5px;
}
.snaps{
    display: flex;
    gap: 1px;
    margin-left: -4px;
}
.snaps button{
    width: 24px;
    height: 22px;
    display: flex;
    align-items: center;
    justify-content: center;
}
.snaps .box{
    border: 1px solid #d3dad8;
}
.snaps svg{
    stroke: #b3b8b6;
}
.selbar .end{
    margin: 7px 6px 0 auto;
}

/* resource rail */
.work{
    flex: 1;
    min-height: 0;
    display: flex;
    border-bottom: 1px solid #999;
}
.rail{
    width: 32px;
    display: flex;
    flex-direction: column;
    background: #d8dbd9;
    border-right: 1px solid #a5a8a6;
}
.rail button{
    height: 42px;
    width: 31px;
    flex: none;
    display: flex;
    align-items: center;
    justify-content: flex-end;
    padding-right: 1px;
}
.rail svg{
    width: 24px;
    height: 24px;
}
.rail .gear{
    height: 26px;
    margin-bottom: 15px;
    padding-right: 8px;
}
.gear svg{
    width: 15px;
    height: 15px;
}
.rail .active{
    width: 30px;
    margin-left: 2px;
    background: #fff;
    border: 1px solid #999;
    border-right: 0;
    height: 44px;
    margin-top: -1px;
    margin-bottom: -1px;
    margin-right: -2px;
}
.rail .info, .rail .web{
    height: 54px;
    padding-top: 12px;
}
.rail .curve{
    height: 38px;
    padding: 14px 3px 0 0;
}
.curve svg{
    width: 28px;
    height: 28px;
}
.more{
    display: flex;
    flex-direction: column;
    align-items: center;
    gap: 11px;
    margin-top: auto;
    padding-bottom: 8px;
}
.up{
    border: 4px solid transparent;
    border-bottom-color: #aaa;
    border-top: 0;
}

/* operation navigator */
.navigator{
    width: 332px;
    display: flex;
    flex-direction: column;
    padding: 5px 6px 5px 6px;
    border-right: 2px solid #a8a8a8;
}
.panel-title{
    display: flex;
    justify-content: space-between;
    align-items: center;
    height: 20px;
    padding: 0 9px 0 4px;
}
.panel-title h2{
    font-size: 12px;
    font-weight: normal;
    margin: 0;
}
.panel-title button{
    width: 12px;
    height: 11px;
    border: 1px solid #111;
    border-top-width: 2px;
}
.views{
    display: flex;
    gap: 2px;
    padding: 7px 4px 4px;
}
.views button{
    width: 32px;
    height: 32px;
    display: flex;
    align-items: center;
    justify-content: center;
}
.views svg{
    width: 24px;
    height: 24px;
}
.views .on{
    background: #8cc3c8;
    box-shadow: none;
}
.views .framed{
    margin-left: 2px;
    border: 1px solid #777;
}
.views .off{
    border-color: #aaa;
    opacity: .6;
}
.grid{
    flex: 1;
    min-height: 0;
    position: relative;
    display: flex;
    flex-direction: column;
    margin: 0 7px 0 6px;
    padding: 1px 2px 2px 2px;
    border: 1px solid #cdd3cf;
    font-size: 12px;
}
.grid table{
    width: 100%;
    table-layout: fixed;
    border-collapse: collapse;
}
th{
    height: 21px;
    padding: 2px 0 0 5px;
    line-height: 18px;
    text-align: left;
    font-weight: normal;
    background: #eff3f1;
    border-right: 1px solid #d5dad7;
    border-bottom: 1px solid #ccd2cf;
}
.name{
    width: 198px;
}
.toolpath{
    width: 52px;
}
td{
    height: 20px;
    padding: 0;
    border-bottom: 1px solid #e4ebe7;
    border-right: 1px solid #edf1ef;
}
tbody tr:nth-child(even){
    background: #f6faf8;
}
.node{
    display: flex;
    align-items: center;
    height: 19px;
}
.node svg{
    width: 16px;
    height: 16px;
    margin-right: 3px;
}
.node b{
    width: 11px;
    text-align: center;
    color: #d4b45c;
    font-size: 15px;
    font-weight: 600;
}
.n1{
    padding-left: 3px;
}
.n2{
    padding-left: 27px;
}
.n3{
    padding-left: 22px;
}
.n4{
    padding-left: 45px;
}
.fold{
    width: 9px;
    height: 9px;
    line-height: 5px;
    border: 1px solid #bbb;
    background: #fff;
}
.dots{
    width: 8px;
    border-top: 1px dotted #888;
}
.n2 .dots, .n4 .dots{
    height: 20px;
    border-top: 0;
    border-left: 1px dotted #999;
    background: linear-gradient(90deg, #aaa 1px, transparent 1px) 0 9px / 2px 1px repeat-x;
}
.n4 .dots{
    height: 10px;
    margin-top: -9px;
    width: 12px;
    background-position: 0 8px;
}
.n1 b, .n3 b{
    margin: 0 2px 0 1px;
}
.n4 b{
    margin: 0 2px;
}
.n4 svg{
    margin-right: 0;
}
.node span{
    flex: 1;
    height: 20px;
    line-height: 20px;
    padding-left: 3px;
    background: #85bac4;
    outline: 1px dotted #244;
    outline-offset: -1px;
}
.selected .ok, .selected .tool{
    background: #85bac4;
    border-bottom: 1px dotted #355;
    border-right-color: #9ccad2;
}
.selected .tool{
    padding-left: 5px;
}
.ok svg{
    width: 14px;
    height: 14px;
    margin-left: 6px;
    stroke: #56c987;
    stroke-width: 2;
}
.rows{
    flex: 1;
    background: linear-gradient(90deg, transparent 250px, #edf1ef 250px, #edf1ef 251px, transparent 251px), repeating-linear-gradient(#fff 0 19px, #e9efec 19px 20px, #f6faf8 20px 39px, #e9efec 39px 40px);
}
.scroll{
    height: 16px;
    display: flex;
    align-items: center;
    background: #f0f4f2;
}
.scroll button{
    width: 16px;
    display: flex;
    justify-content: center;
}
.scroll svg{
    width: 8px;
    height: 8px;
    stroke-width: 2;
}
.scroll span{
    flex: 1;
    height: 15px;
}
.scroll i{
    display: block;
    width: 37%;
    height: 15px;
    background: #ccd0ce;
}
.navigator hr{
    width: 100%;
    margin: 5px 0 0;
    border: 0;
    border-top: 1px solid #ccc;
}
.splitter{
    position: absolute;
    left: 200px;
    top: 22px;
    bottom: 18px;
    width: 1px;
    background: #111;
}
.context{
    position: absolute;
    left: 149px;
    top: 93px;
    width: 98px;
    margin: 0;
    padding: 0 0 3px;
    list-style: none;
    font-size: 11px;
    color: #c6cbc8;
    box-shadow: 2px 2px 2px #777;
    background: linear-gradient(transparent 10px, rgba(253, 254, 253, .7) 24px);
    clip-path: inset(0 -5px -5px 6px);
}
.context li{
    display: flex;
    align-items: center;
    height: 24px;
    padding-left: 7px;
    gap: 5px;
}
.context svg{
    width: 17px;
    height: 17px;
    stroke: #c6cbc8;
}
.context .sep{
    margin-top: 9px;
}
.sub{
    justify-content: space-between;
}
.context .sub{
    padding: 0 10px 0 29px;
}
.sub::after{
    content: "";
    border: 3px solid transparent;
    border-left: 4px solid #bcc2be;
    border-right: 0;
}
.cursor{
    position: absolute;
    left: 149px;
    top: 90px;
    width: 14px;
    height: 20px;
    fill: #fff;
    stroke: #222;
}

/* graphics window */
.view{
    flex: 1;
    min-width: 0;
    display: flex;
    flex-direction: column;
}
.doctabs{
    display: flex;
    border-bottom: 2px solid #14606e;
}
.doc{
    height: 24px;
    display: flex;
    align-items: center;
    gap: 5px;
    padding: 0 6px;
    font-size: 12px;
    background: #0a5f7c;
    color: #e4fdfd;
}
.doc svg{
    width: 17px;
    height: 17px;
    stroke: #d2f6f8;
}
.doc .mod{
    width: 11px;
    height: 11px;
}
.doc .close{
    width: 9px;
    height: 9px;
    margin-left: 1px;
}
.scene{
    flex: 1;
    min-height: 0;
    width: 100%;
    font-size: 13px;
}
.edge{
    stroke: #2b302e;
}
.cut{
    stroke: #20e6dd;
    stroke-width: 2;
}
.step{
    stroke: #35d835;
    stroke-width: 3;
}
.status{
    height: 22px;
    text-align: center;
    line-height: 22px;
    padding-right: 20px;
    font-weight: 600;
}
```
